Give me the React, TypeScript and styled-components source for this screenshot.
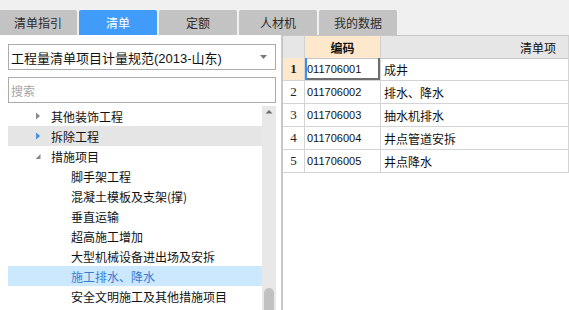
import React from 'react';
import styled, { createGlobalStyle } from 'styled-components';

const GlobalStyle = createGlobalStyle`
    html, body {
        margin: 0;
        padding: 0;
        background: #ffffff;
    }

    body {
        font-family: "Liberation Sans", "Noto Sans CJK SC", sans-serif;
        color: #1a1a1a;
    }

    * {
        box-sizing: border-box;
    }
`;

const tabs = ['清单指引', '清单', '定额', '人材机', '我的数据'];

const treeItems = [
    { label: '其他装饰工程', level: 0, arrow: 'closed' },
    { label: '拆除工程', level: 0, arrow: 'closed', hover: true },
    { label: '措施项目', level: 0, arrow: 'open' },
    { label: '脚手架工程', level: 1 },
    { label: '混凝土模板及支架(撑)', level: 1 },
    { label: '垂直运输', level: 1 },
    { label: '超高施工增加', level: 1 },
    { label: '大型机械设备进出场及安拆', level: 1 },
    { label: '施工排水、降水', level: 1, selected: true },
    { label: '安全文明施工及其他措施项目', level: 1 },
];

const rows = [
    { code: '011706001', name: '成井' },
    { code: '011706002', name: '排水、降水' },
    { code: '011706003', name: '抽水机排水' },
    { code: '011706004', name: '井点管道安拆' },
    { code: '011706005', name: '井点降水' },
];

const Page = styled.div`
    display: flex;
    flex-direction: column;
    height: 310px;
    overflow: hidden;
    width: 569px;
`;

const TabBar = styled.div`
    align-items: flex-end;
    background: #f0f0f0;
    display: flex;
    flex-shrink: 0;
    gap: 2px;
    height: 35px;
    margin-left: -1px;
`;

const Tab = styled.div<{ $active?: boolean }>`
    align-items: center;
    background: ${props => (props.$active ? '#419bf9' : '#c3c3c3')};
    border-radius: 2px 2px 0 0;
    color: ${props => (props.$active ? '#ffffff' : '#2b2b2b')};
    display: flex;
    font-family: "Noto Sans CJK SC", sans-serif;
    font-size: 12px;
    height: 25px;
    justify-content: center;
    width: 78px;
`;

const Body = styled.div`
    display: flex;
    flex: 1;
    min-height: 0;
`;

const LeftPane = styled.div`
    border-right: 1px solid #cbcbcb;
    display: flex;
    flex-direction: column;
    flex-shrink: 0;
    padding: 9px 5px 0 8px;
    width: 282px;
`;

const Field = styled.div`
    align-items: center;
    border: 1px solid #ababab;
    display: flex;
    flex-shrink: 0;
    height: 26px;
    padding: 0 8px 0 2px;
`;

const SelectText = styled.span`
    color: #111111;
    flex: 1;
    font-size: 13px;
    white-space: nowrap;
`;

const Placeholder = styled.span`
    color: #a6a6a6;
    font-family: "Noto Sans CJK SC", sans-serif;
    font-size: 12px;
`;

const SearchField = styled(Field)`
    margin-top: 7px;
`;

const TreeArea = styled.div`
    display: flex;
    flex: 1;
    margin-top: 3px;
    min-height: 0;
`;

const TreeList = styled.div`
    flex: 1;
    overflow: hidden;
`;

const TreeRow = styled.div<{ $level: number; $hover?: boolean; $selected?: boolean }>`
    align-items: center;
    background: ${props => (props.$selected ? '#cce8ff' : props.$hover ? '#e5e5e5' : 'transparent')};
    color: ${props => (props.$selected ? '#3a7bd0' : '#111111')};
    display: flex;
    font-family: "Noto Sans CJK SC", sans-serif;
    font-size: 12px;
    height: 20px;
    padding-left: ${props => 27 + props.$level * 20}px;
    white-space: nowrap;
`;

const ArrowSlot = styled.span`
    display: inline-flex;
    flex-shrink: 0;
    width: 16px;
`;

const ScrollTrack = styled.div`
    background: #e8e8e8;
    display: flex;
    flex-direction: column;
    flex-shrink: 0;
    justify-content: space-between;
    padding: 3px 2px 0;
    width: 14px;
`;

const ScrollThumb = styled.div`
    background: #c1c1c1;
    border-radius: 5px 5px 0 0;
    height: 22px;
    width: 10px;
`;

const RightPane = styled.div`
    display: flex;
    flex: 1;
    flex-direction: column;
    min-width: 0;
`;

const Grid = styled.div`
    border-left: 1px solid #c4c4c4;
    display: grid;
    grid-template-columns: 22px 76px 1fr;
    grid-auto-rows: 23px;
`;

const HeadCell = styled.div<{ $active?: boolean; $align?: string }>`
    align-items: center;
    background: ${props => (props.$active ? '#fee8cb' : '#e6e6e6')};
    border-bottom: 1px solid #c6c6c6;
    border-right: 1px solid #d2d2d2;
    border-top: 1px solid #c6c6c6;
    color: #111111;
    display: flex;
    font-family: "Noto Sans CJK SC", sans-serif;
    font-size: 12px;
    font-weight: ${props => (props.$active ? 700 : 400)};
    height: 24px;
    justify-content: ${props => props.$align || 'center'};
    padding-right: ${props => (props.$align === 'flex-end' ? '12px' : '0')};
`;

const NumCell = styled.div<{ $active?: boolean }>`
    align-items: center;
    background: ${props => (props.$active ? '#fee8cb' : '#ffffff')};
    border-bottom: 1px solid #d4d4d4;
    border-right: 1px solid #d4d4d4;
    color: #222222;
    display: flex;
    font-family: "Liberation Serif", serif;
    font-size: 13px;
    font-weight: ${props => (props.$active ? 700 : 400)};
    justify-content: center;
`;

const Cell = styled.div<{ $focus?: boolean; $cjk?: boolean }>`
    align-items: center;
    border-bottom: 1px solid #d4d4d4;
    border-right: 1px solid #d4d4d4;
    box-shadow: ${props => (props.$focus ? 'inset 2px 0 0 #3d8ef0, inset -2px -2px 0 #6e6e6e' : 'none')};
    color: #111111;
    display: flex;
    font-family: ${props => (props.$cjk ? '"Noto Sans CJK SC", sans-serif' : '"Liberation Sans", sans-serif')};
    font-size: ${props => (props.$cjk ? '12px' : '11px')};
    overflow: hidden;
    padding-left: ${props => (props.$cjk ? '3px' : '2px')};
    white-space: nowrap;
`;

const Filler = styled.div`
    border-left: 1px solid #c4c4c4;
    flex: 1;
`;

const ClosedArrow = ({ color }: { color: string }) => (
    <svg width="6" height="8" viewBox="0 0 6 8">
        <path d="M1 0.5 L5 4 L1 7.5 Z" fill={color} />
    </svg>
);

const OpenArrow = () => (
    <svg width="6" height="8" viewBox="0 0 6 8">
        <path d="M5.5 2 L5.5 7 L0.5 7 Z" fill="#8a8a8a" />
    </svg>
);

const App = () => {
    return (
        <Page>
            <GlobalStyle />
            <TabBar>
                {tabs.map(t => (
                    <Tab key={t} $active={t === '清单'}>
                        {t}
                    </Tab>
                ))}
            </TabBar>
            <Body>
                <LeftPane>
                    <Field>
                        <SelectText>工程量清单项目计量规范(2013-山东)</SelectText>
                        <svg width="7" height="4" viewBox="0 0 7 4">
                            <path d="M0 0 L7 0 L3.5 4 Z" fill="#7a7a7a" />
                        </svg>
                    </Field>
                    <SearchField>
                        <Placeholder>搜索</Placeholder>
                    </SearchField>
                    <TreeArea>
                        <TreeList>
                            {treeItems.map(item => (
                                <TreeRow
                                    key={item.label}
                                    $level={item.level}
                                    $hover={item.hover}
                                    $selected={item.selected}
                                >
                                    <ArrowSlot>
                                        {item.arrow === 'open' ? <OpenArrow /> : null}
                                        {item.arrow === 'closed' ? (
                                            <ClosedArrow color={item.hover ? '#3d8ee8' : '#8a8a8a'} />
                                        ) : null}
                                    </ArrowSlot>
                                    {item.label}
                                </TreeRow>
                            ))}
                        </TreeList>
                        <ScrollTrack>
                            <svg width="10" height="5" viewBox="0 0 10 5">
                                <path d="M1.5 4.5 L5 1 L8.5 4.5 Z" fill="#6e6e6e" />
                            </svg>
                            <ScrollThumb />
                        </ScrollTrack>
                    </TreeArea>
                </LeftPane>
                <RightPane>
                    <Grid>
                        <HeadCell />
                        <HeadCell $active>编码</HeadCell>
                        <HeadCell $align="flex-end">清单项</HeadCell>
                        {rows.map((r, i) => (
                            <React.Fragment key={r.code}>
                                <NumCell $active={i === 0}>{i + 1}</NumCell>
                                <Cell $focus={i === 0}>{r.code}</Cell>
                                <Cell $cjk>{r.name}</Cell>
                            </React.Fragment>
                        ))}
                    </Grid>
                    <Filler />
                </RightPane>
            </Body>
        </Page>
    );
};

export default App;
